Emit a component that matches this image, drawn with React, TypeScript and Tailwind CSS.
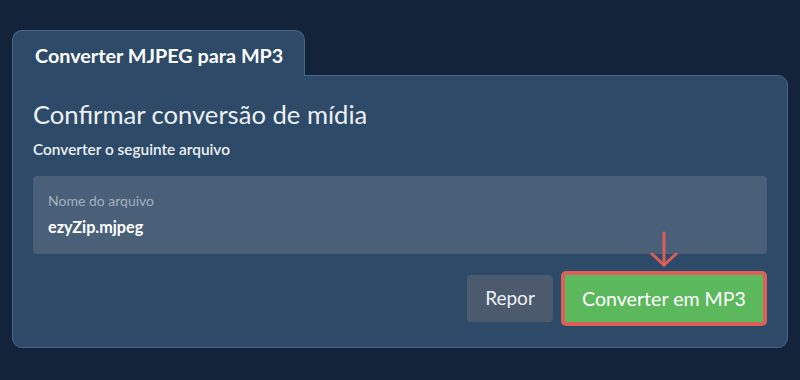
export default function App() {
  return (
    <div className="min-h-[380px] w-[800px] bg-[#12233a] pt-[30px] px-3 font-['Lato','Noto_Sans',sans-serif] text-white">
      <div className="flex">
        <div className="h-[46px] w-[293px] rounded-t-[10px] border border-b-0 border-[#4a6585] bg-[#2d4a69] pl-[22px] pt-[12px] text-[19.8px] font-bold leading-[24px] relative z-10 -mb-px">
          Converter MJPEG para MP3
        </div>
      </div>
      <div className="h-[273px] w-[776px] rounded-b-[10px] rounded-tr-[10px] border border-[#4a6585] bg-[#2d4a69] px-5 pt-[22px]">
        <h1 className="text-[25.6px] leading-[32px] text-[#eef1f4]">Confirmar conversão de mídia</h1>
        <p className="mt-[10px] text-[15.4px] font-semibold leading-[19px] text-[#eef1f4]">Converter o seguinte arquivo</p>
        <div className="mt-[17px] h-[78px] rounded-[4px] bg-[#4a5f78] px-[15px] pt-[16px]">
          <div className="text-[14px] leading-[17px] text-[#a5b1bf]">Nome do arquivo</div>
          <div className="mt-[8px] text-[16.2px] font-bold leading-[20px]">ezyZip.mjpeg</div>
        </div>
        <div className="mt-[17px] flex items-center justify-end gap-2">
          <button className="h-[47px] w-[86px] rounded-[4px] bg-[#4b5b6d] text-[19px] text-[#eef1f4]">Repor</button>
          <div className="relative">
            <svg className="absolute left-[88px] -top-[40px]" width="30" height="38" viewBox="0 0 30 38" fill="none" stroke="#dc6058" strokeWidth="3" strokeLinecap="round" strokeLinejoin="round">
              <path d="M15 2 V34" />
              <path d="M3 23 L15 34 L27 23" />
            </svg>
            <button className="h-[55px] w-[206px] rounded-[5px] border-[4px] border-[#dc6058] bg-[#5cb85c] text-[19.6px] text-white">Converter em MP3</button>
          </div>
        </div>
      </div>
    </div>
  )
}
